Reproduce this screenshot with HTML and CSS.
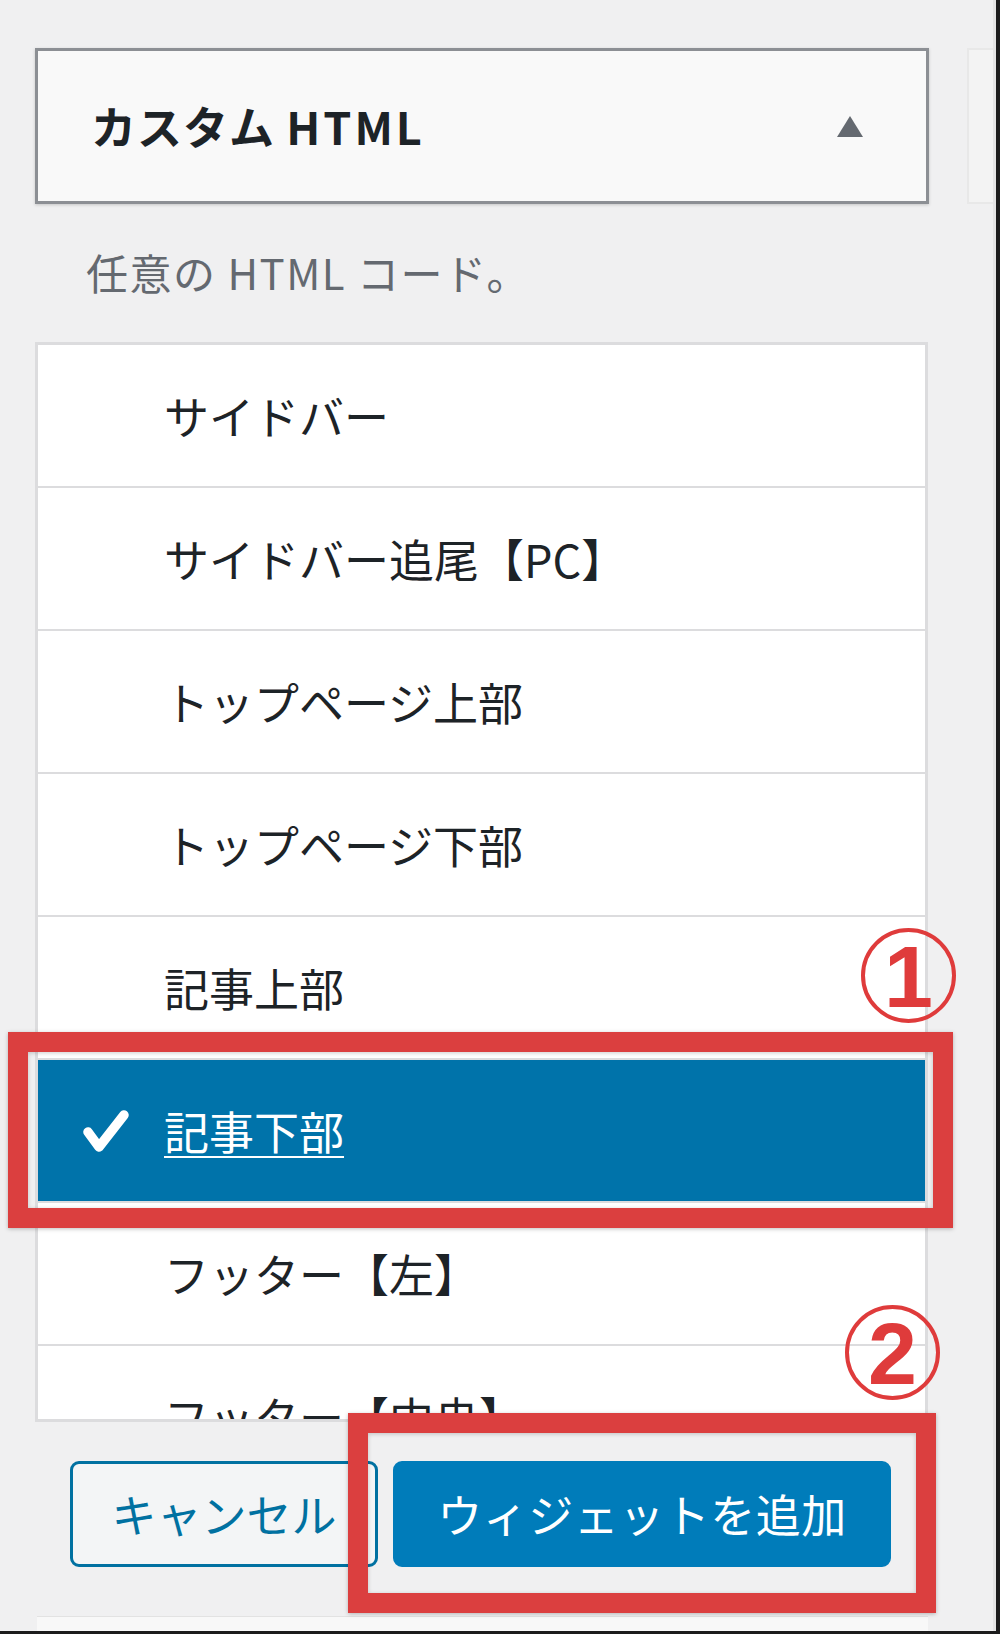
FILE: index.html
```html
<!DOCTYPE html>
<html lang="ja">
<head>
<meta charset="utf-8">
<title>カスタム HTML</title>
<link rel="stylesheet" href="styles.css">
</head>
<body>
<div class="screen">
  <div class="main">
    <div class="widget-top">
      <span class="widget-title">カスタム <span class="latin">HTML</span></span>
      <span class="toggle-arrow"></span>
    </div>
    <p class="desc">任意の HTML コード。</p>
    <ul class="area-list">
      <li class="item"><span class="check-slot"></span><span class="label">サイドバー</span></li>
      <li class="item"><span class="check-slot"></span><span class="label">サイドバー追尾【PC】</span></li>
      <li class="item"><span class="check-slot"></span><span class="label">トップページ上部</span></li>
      <li class="item"><span class="check-slot"></span><span class="label">トップページ下部</span></li>
      <li class="item"><span class="check-slot"></span><span class="label">記事上部</span></li>
      <li class="item selected"><span class="check-slot"><svg class="check" viewBox="0 0 48 46" width="48" height="46"><path d="M6 24 L17 39 L42 7" fill="none" stroke="#fff" stroke-width="9.5" stroke-linecap="round" stroke-linejoin="round"/></svg></span><span class="label">記事下部</span></li>
      <li class="item"><span class="check-slot"></span><span class="label">フッター【左】</span></li>
      <li class="item"><span class="check-slot"></span><span class="label">フッター【中央】</span></li>
    </ul>
    <div class="actions">
      <button class="btn btn-cancel">キャンセル</button>
      <button class="btn btn-add">ウィジェットを追加</button>
    </div>
    <div class="footer-panel"></div>
  </div>
  <div class="side">
    <div class="side-card"></div>
  </div>

  <div class="mark-box mark-box-1"></div>
  <div class="mark-box mark-box-2"></div>
  <div class="num-circle num-1"><span>1</span></div>
  <div class="num-circle num-2"><span>2</span></div>
</div>
</body>
</html>
```

FILE: styles.css
```css
html, body {
  margin: 0;
  padding: 0;
}
body {
  width: 1000px;
  height: 1634px;
  overflow: hidden;
  background: #f0f0f1;
  font-family: "Noto Sans CJK JP", "Noto Sans", sans-serif;
  color: #1d2327;
}
.screen {
  position: relative;
  display: flex;
  width: 1000px;
  height: 1634px;
  box-sizing: border-box;
  border-right: 4px solid #1c1c1c;
  border-bottom: 3px solid #1c1c1c;
  background: #f0f0f1;
}
.main {
  width: 967px;
  flex: none;
}
.widget-top {
  margin: 48px 0 0 35px;
  width: 894px;
  height: 156px;
  box-sizing: border-box;
  border: 3px solid #8c8f94;
  background: #f9f9f9;
  box-shadow: 0 1px 3px rgba(0, 0, 0, 0.18);
  display: flex;
  align-items: center;
  justify-content: space-between;
  padding: 0 63px 0 53px;
}
.widget-title {
  font-size: 45px;
  font-weight: 700;
  line-height: 60px;
  letter-spacing: 1px;
  color: #1d2327;
}
.widget-title .latin {
  letter-spacing: 3px;
}
.toggle-arrow {
  width: 0;
  height: 0;
  border-left: 13.5px solid transparent;
  border-right: 13.5px solid transparent;
  border-bottom: 21px solid #646970;
}
.desc {
  margin: 38px 0 0 86px;
  height: 60px;
  line-height: 60px;
  font-size: 42px;
  letter-spacing: 1.5px;
  color: #646970;
}
.area-list {
  list-style: none;
  margin: 40px 0 0 35px;
  padding: 0;
  width: 893px;
  height: 1080px;
  box-sizing: border-box;
  border: 3px solid #dcdcde;
  background: #fff;
  overflow: hidden;
}
.item {
  height: 141px;
  border-bottom: 2.5px solid #dcdcde;
  display: flex;
  align-items: center;
  padding-left: 44px;
  font-size: 45px;
  line-height: 60px;
  color: #1d2327;
}
.check-slot {
  flex: none;
  width: 48px;
  height: 46px;
  margin-right: 34px;
  display: flex;
}
.item.selected {
  background: #0073aa;
  color: #fff;
}
.item.selected .label {
  text-decoration: underline;
  text-decoration-thickness: 2px;
  text-underline-offset: 6px;
}
.actions {
  margin: 39px 0 0 70px;
  display: flex;
  gap: 15px;
}
.btn {
  height: 106px;
  box-sizing: border-box;
  border-radius: 9px;
  font-family: "Noto Sans CJK JP", "Noto Sans", sans-serif;
  font-size: 45px;
  line-height: 60px;
  padding: 0;
  cursor: pointer;
}
.btn-cancel {
  width: 308px;
  border: 3px solid #0071a1;
  background: #f3f5f6;
  color: #0071a1;
}
.btn-add {
  width: 498px;
  border: 3px solid #007cba;
  background: #007cba;
  color: #fff;
  letter-spacing: 0.5px;
}
.footer-panel {
  margin: 49px 0 0 37px;
  width: 891px;
  height: 15px;
  box-sizing: border-box;
  background: #f8f8f8;
  border-top: 1px solid #e2e2e2;
}
.side {
  flex: 1;
  padding-top: 48px;
  border-right: 3px solid #e4e4e4;
}
.side-card {
  height: 156px;
  box-sizing: border-box;
  background: #f3f3f3;
  border: 2px solid #e8e8e8;
  border-right: none;
}

/* annotation overlays */
.mark-box {
  position: absolute;
  box-sizing: border-box;
  border: 20px solid #db3f3f;
  box-shadow: 0 1px 4px rgba(0, 0, 0, 0.25), inset 0 1px 4px rgba(0, 0, 0, 0.2);
}
.mark-box-1 {
  left: 8px;
  top: 1032px;
  width: 945px;
  height: 196px;
}
.mark-box-2 {
  left: 348px;
  top: 1413px;
  width: 588px;
  height: 200px;
}
.num-circle {
  position: absolute;
  width: 95px;
  height: 95px;
  box-sizing: border-box;
  border: 4.5px solid #df3b3b;
  border-radius: 50%;
  display: flex;
  align-items: center;
  justify-content: center;
  color: #df3b3b;
  font-family: "Liberation Sans", Arial, sans-serif;
  font-weight: 700;
  font-size: 88px;
  line-height: 1;
}
.num-circle span {
  display: block;
  margin-top: 2px;
}
.num-1 {
  left: 861px;
  top: 928px;
}
.num-2 {
  left: 845px;
  top: 1305px;
}
```
